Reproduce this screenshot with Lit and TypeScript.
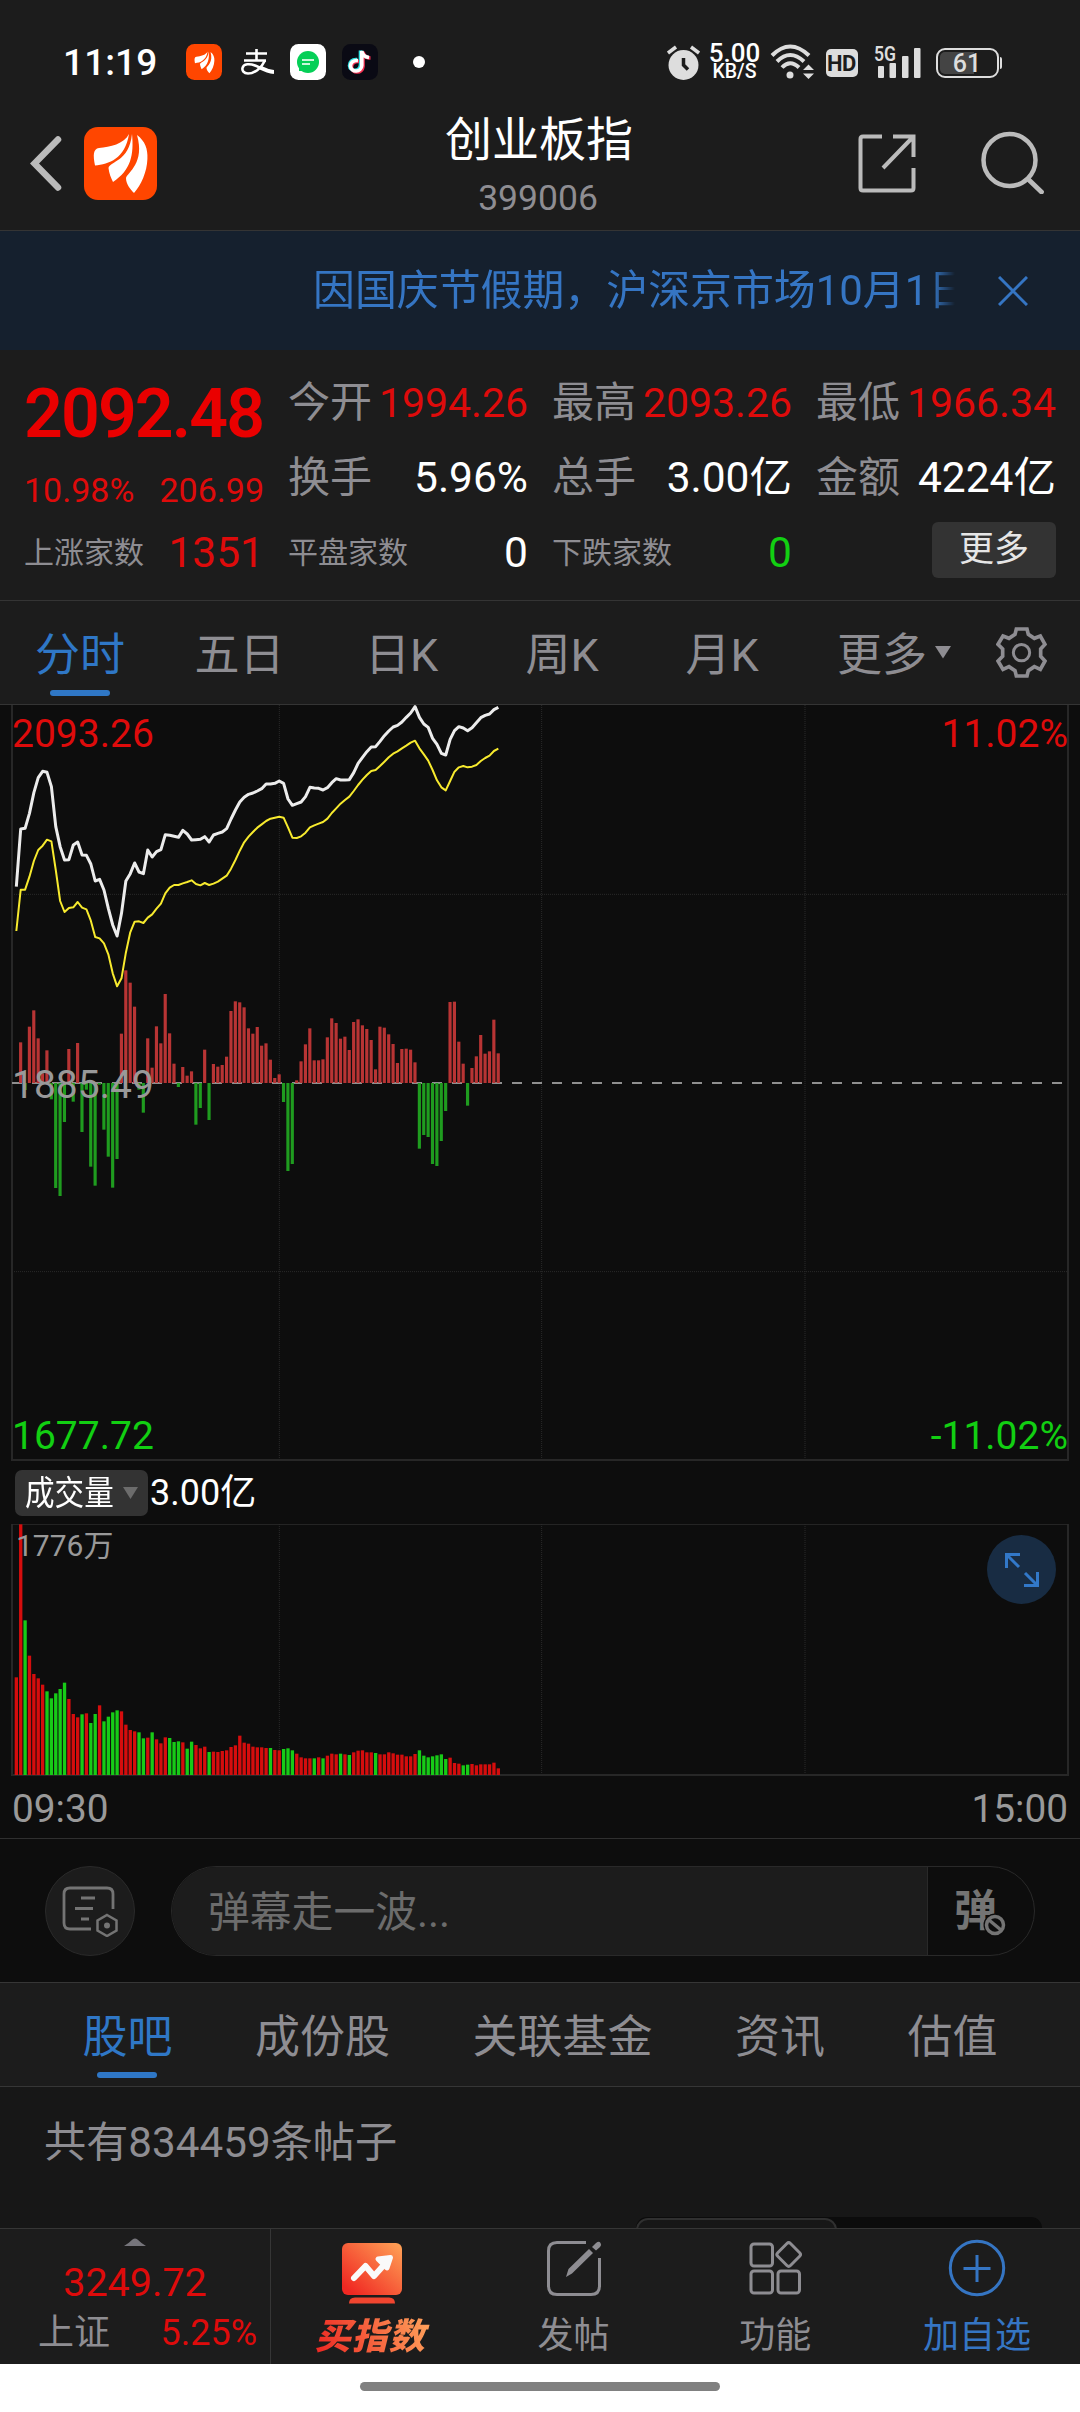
import { LitElement, html, svg, css } from "lit";
import { customElement, property } from "lit/decorators.js";
import { classMap } from "lit/directives/class-map.js";

/* ---------- chart data: drawn in thirds of a pixel, one sample per minute ---------- */
const X0 = 49;
const STEP = 13.145;
const at = (i: number) => X0 + STEP * i;

const PRICE = [
  560, 387, 385, 340, 278, 233, 214, 217, 260, 380, 440, 480, 479, 435, 426, 465, 466, 492, 543, 538, 570, 625,
  675, 708, 640, 543, 521, 489, 516, 521, 450, 471, 455, 449, 404, 406, 409, 412, 391, 402, 420, 419, 418, 410,
  426, 405, 400, 396, 386, 357, 330, 306, 292, 283, 279, 273, 266, 252, 252, 250, 243, 250, 297, 316, 311, 306,
  290, 262, 264, 265, 270, 263, 248, 236, 240, 240, 239, 218, 190, 172, 155, 141, 140, 124, 107, 93, 81, 76, 66,
  52, 39, 20, 52, 72, 82, 115, 133, 160, 165, 118, 92, 80, 84, 92, 83, 68, 53, 46, 42, 29, 22,
];
const AVERAGE = [
  693, 569, 569, 530, 483, 450, 437, 419, 424, 510, 603, 636, 624, 622, 606, 623, 628, 662, 711, 715, 730, 763,
  820, 859, 835, 758, 697, 665, 664, 669, 653, 643, 626, 611, 580, 563, 555, 555, 550, 546, 541, 552, 556, 549,
  555, 551, 545, 536, 527, 506, 480, 452, 427, 410, 396, 383, 373, 363, 356, 353, 350, 353, 382, 413, 414, 409,
  398, 382, 376, 371, 366, 356, 339, 325, 311, 300, 290, 273, 255, 239, 225, 213, 210, 198, 185, 172, 161, 154,
  145, 137, 128, 122, 145, 163, 182, 210, 241, 262, 271, 243, 215, 202, 198, 202, 200, 195, 183, 174, 167, 153,
  146,
];
const MOMENTUM = [
  0, 122, -21, 169, 218, 134, 29, 98, -49, -315, -339, -117, 102, -56, 120, -147, -20, -251, -308, -5, -140,
  -221, -314, -228, 148, 338, 301, 229, -20, -89, 134, 46, 170, 119, 267, 149, 58, -12, 48, 22, 35, -125, -75,
  100, -111, 57, 49, 54, 79, 216, 245, 242, 227, 164, 148, 168, 112, 119, 70, 15, 26, -57, -264, -243, 8, 65,
  116, 164, 68, 68, 71, 137, 194, 180, 133, 139, 99, 183, 191, 173, 162, 129, 41, 169, 166, 146, 117, 60, 102,
  103, 100, 62, -197, -156, -162, -243, -249, -174, -84, 243, 244, 124, 58, -68, 45, 80, 144, 88, 95, 190, 89,
];
/* positive: up minute, negative: down minute */
const VOLUME = [
  293, 752, -464, 358, 303, 290, 271, -251, -230, -245, -258, -277, 228, 183, 173, -182, 185, -156, -183, 209,
  -161, -175, -188, -194, 191, 151, 135, 131, -128, -110, 112, -128, 107, 95, 113, -111, -99, -101, 98, -79,
  -100, 90, 80, 85, -69, 70, 69, 72, 74, 84, 89, 118, 97, 94, 85, 83, 83, 81, -81, 75, 74, -78, -80, -74, 64,
  53, 50, 50, -50, 53, -50, 58, 64, 62, -64, 62, -60, 68, 73, 74, 68, 68, -66, 62, 62, 68, 65, 61, 61, 56, 56,
  63, -74, -58, -53, -56, -59, -62, -48, 52, 36, 34, -29, -31, 33, 29, 32, 32, 32, 37, 20,
];

const points = (values: number[]) => values.map((v, i) => `${at(i).toFixed(1)},${v - 15}`).join(" ");

const feathers = svg`
  <path d="M45 7C40 17 26 20 15 21C9 22 9 28 11 38.500C25 37 41 32 45 7Z"/>
  <path d="M48 7C50 28 47 43 29 55C27 51 25 46 24.500 41C26 34 45 35 48 7Z"/>
  <path d="M53 8C61 14 64 22 63.400 32C63 45 57 58 50 66C46 62 42 57 42 51C44 45 61 36 53 8Z"/>`;

@customElement("status-bar")
export class StatusBar extends LitElement {
  static styles = css`
    :host { display: flex; height: 96px; padding: 27px 78px 0 63px; box-sizing: border-box; color: #fff; font-family: Roboto, sans-serif; }
    .left, .right { display: flex; align-items: center; height: 70px; }
    .left { flex: 1; }
    .time { font-size: 37px; font-weight: 500; width: 123px; letter-spacing: 0.1px; }
    .app { margin-right: 16px; flex: none; }
    .pay { margin: 0 16px 0 3px; }
    .dot { width: 12px; height: 12px; border-radius: 50%; background: #fff; margin-left: 19px; }
    .rate { width: 54px; margin: 0 8px; text-align: center; font-weight: 500; }
    .num { font-size: 26px; line-height: 20px; }
    .unit { font-size: 19.500px; line-height: 18px; }
    .hd { margin: 2px 16px 0 12px; width: 32px; height: 28px; border-radius: 5px; background: #ddd; color: #1c1c1c; font-size: 22px; line-height: 29px; font-weight: 700; text-align: center; letter-spacing: -0.500px; }
    .signal { overflow: visible; }
    .cell { font-size: 20px; font-weight: 600; font-family: Roboto, sans-serif; }
    .battery { display: flex; align-items: center; margin-left: 15px; margin-top: 1px; }
    .shell { box-sizing: border-box; width: 63px; height: 30px; border: 2px solid #ddd; border-radius: 9px; padding: 2px; display: flex; }
    .level { width: 55px; border-radius: 5px; background: linear-gradient(90deg, #444 61%, transparent 61%); color: #ddd; font-size: 25px; line-height: 23px; text-align: center; font-weight: 500; }
    .nub { width: 2.500px; height: 12px; margin-left: 1px; background: #ddd; border-radius: 0 2px 2px 0; }
  `;
  render() {
    return html`
      <div class="left">
        <span class="time">11:19</span>
        <svg class="app" width="36" height="36" viewBox="0 0 73 73"><rect width="73" height="73" rx="17" fill="#ff4600"/><g fill="#fff" transform="translate(10 10) scale(.75)">${feathers}</g></svg>
        <svg class="pay" width="33" height="27" viewBox="0 0 33 27" fill="none" stroke="#fff">
          <path d="M5 4.500H26M3 11.500H25M15.500 0V11.500" stroke-width="2.600"/>
          <path d="M24 11.500C20 20 13 24.500 7 24.500C2.500 24.500 1 21.500 1.500 19C2.500 14.500 9 14.500 14 16.500C20 19 27 22.500 33 23" stroke-width="2.600"/>
          <path d="M19 18.500C24 21 28 22.500 33 23" stroke-width="4"/>
        </svg>
        <svg class="app" width="36" height="36" viewBox="0 0 36 36">
          <rect width="36" height="36" rx="8.500" fill="#fff"/><circle cx="18" cy="18" r="11" fill="#05cf57"/><path d="M9 18V27H18Z" fill="#05cf57"/>
          <path d="M12 16H24M12 20H20" stroke="#c8f7da" stroke-width="2"/>
        </svg>
        <svg class="app" width="36" height="36" viewBox="0 0 36 36" fill="none" stroke-width="3.600">
          <rect width="36" height="36" rx="8.500" fill="#0a0a14"/>
          <path d="M15 15.500C10 15 7.500 18 7.500 21.500C8 28 18 28 18.500 21V6.500C19 10.500 22 12.500 26 13" stroke="#33e4e6"/>
          <path d="M17 17.500C12 17 9.500 20 9.500 23C10 30 20.500 29.500 21 22.500V8C22 12 24 14 28.500 14" stroke="#f43052"/>
          <path d="M16 16.500C11 16 8.500 19 8.500 22C9 29 19.500 28.500 19.800 21.500V7C20.500 11 23 13 27 13.500" stroke="#fff"/>
        </svg>
        <span class="dot"></span>
      </div>
      <div class="right">
        <svg width="33" height="35" viewBox="0 0 33 35"><circle cx="16.500" cy="20" r="15" fill="#ddd"/><path d="M1 8L9 2M32 8L24 2" stroke="#ddd" stroke-width="3.500"/><path d="M16.500 13V20L21 24.500" fill="none" stroke="#1c1c1c" stroke-width="3.500"/></svg>
        <div class="rate"><div class="num">5.00</div><div class="unit">KB/S</div></div>
        <svg width="44" height="36" viewBox="0 0 44 36">
          <g fill="none" stroke="#ddd" stroke-width="4"><path d="M2 11.500Q20 -6.500 39 11.500"/><path d="M7 17.500Q20 4.500 34 17.500"/><path d="M12 23.500Q20 15 29 23.500"/></g>
          <circle cx="20" cy="31" r="3.500" fill="#ddd"/>
          <path d="M33 26L38.500 20.500L44 26ZM33 29.500L38.500 35L44 29.500Z" fill="#ddd"/>
        </svg>
        <div class="hd">HD</div>
        <svg class="signal" width="47" height="36" viewBox="0 0 47 36" fill="#ddd">
          <text class="cell" x="0" y="17" textLength="22" lengthAdjust="spacingAndGlyphs">5G</text>
          <rect x="4" y="22" width="6" height="12" rx="1"/><rect x="15.500" y="19" width="6.500" height="15" rx="1"/><rect x="28" y="12" width="6.500" height="22" rx="1"/><rect x="40" y="4" width="6.500" height="30" rx="1"/>
        </svg>
        <div class="battery"><div class="shell"><div class="level">61</div></div><div class="nub"></div></div>
      </div>`;
  }
}

@customElement("title-bar")
export class TitleBar extends LitElement {
  static styles = css`
    :host { display: grid; grid-template-columns: 360px 1fr 360px; height: 135px; box-sizing: border-box; border-bottom: 1px solid #343434; }
    .side { display: flex; align-items: flex-start; }
    .side.start { padding-left: 30px; padding-top: 31px; gap: 22px; }
    .side.end { justify-content: flex-end; padding: 35px 35px 0 0; gap: 65px; }
    .back { margin-top: 9px; }
    .title { text-align: center; }
    .name { font: 400 47px/64px "Noto Sans CJK SC", sans-serif; color: #fff; padding: 8px 2px 0 0; }
    .code { font: 400 35.500px/42px Roboto, sans-serif; color: #8e8d92; padding: 9px 4px 0 0; }
  `;
  render() {
    return html`
      <div class="side start">
        <svg class="back" width="32" height="55" viewBox="0 0 32 55"><path d="M28 3.500L4.500 27.500L28 51.500" fill="none" stroke="#bbb" stroke-width="6.500" stroke-linecap="round"/></svg>
        <svg width="73" height="73" viewBox="0 0 73 73"><rect width="73" height="73" rx="14" fill="#ff4600"/><g fill="#fff">${feathers}</g></svg>
      </div>
      <div class="title"><div class="name">创业板指</div><div class="code">399006</div></div>
      <div class="side end">
        <svg width="58" height="63" viewBox="0 0 58 63" fill="none" stroke="#bbb" stroke-width="4"><path d="M24 5.500H5Q2.500 5.500 2.500 8V57Q2.500 59.500 5 59.500H53Q55.500 59.500 55.500 57V37M35 5.500H55.500V26M55 6L25 37"/></svg>
        <svg width="64" height="63" viewBox="0 0 64 63" fill="none" stroke="#bbb"><circle cx="28.500" cy="29" r="26" stroke-width="4.500"/><path d="M47.500 48.500L60.500 61" stroke-width="4.800" stroke-linecap="round"/></svg>
      </div>`;
  }
}

@customElement("notice-bar")
export class NoticeBar extends LitElement {
  static styles = css`
    :host { display: flex; align-items: center; height: 119px; background: #15202e; box-sizing: border-box; padding: 0 52px 0 313px; justify-content: space-between; }
    .text { width: 646px; overflow: hidden; white-space: nowrap; color: #3575c3; font: 400 41.900px/60px Roboto, "Noto Sans CJK SC", sans-serif; padding-top: 1px; mask-image: linear-gradient(90deg, #000 620px, transparent 642px); -webkit-mask-image: linear-gradient(90deg, #000 620px, transparent 642px); }
  `;
  render() {
    return html`<div class="text">因国庆节假期，沪深京市场10月1日</div>
      <svg width="30" height="30" viewBox="0 0 30 30"><path d="M1 1L29 29M29 1L1 29" stroke="#3575c3" stroke-width="3"/></svg>`;
  }
}

@customElement("quote-panel")
export class QuotePanel extends LitElement {
  static styles = css`
    :host { display: grid; grid-template-columns: repeat(4, 240px); grid-template-rows: repeat(3, 75px); column-gap: 24px; height: 251px; box-sizing: border-box; padding: 15px 24px 0; border-bottom: 1px solid #343434; font-family: Roboto, "Noto Sans CJK SC", sans-serif; color: #8e8d92; }
    .main { grid-row: span 2; display: flex; flex-direction: column; color: #ea0000; }
    .price { font-size: 68px; font-weight: 600; line-height: 92px; letter-spacing: -1.900px; padding-top: 3px; }
    .change { display: flex; justify-content: space-between; font-size: 34px; line-height: 60px; color: #de0b0b; }
    .item { display: flex; justify-content: space-between; align-items: center; white-space: nowrap; }
    .key { font-size: 42px; line-height: 60px; }
    .key.small { font-size: 30px; }
    .val { font-size: 42.500px; line-height: 60px; color: #fff; }
    .val.up { color: #de0b0b; }
    .val.fit { font-size: 41px; }
    .val.down { color: #12d012; }
    .more { margin-left: auto; width: 124px; height: 56px; border-radius: 6px; background: #333; color: #e6e6e6; font-size: 35px; line-height: 56px; text-align: center; margin-top: -5px; }
  `;
  private item(key: string, value: string, tone = "", small = false) {
    return html`<div class="item"><span class=${classMap({ key: true, small })}>${key}</span><span class="val ${tone}">${value}</span></div>`;
  }
  render() {
    return html`
      <div class="main"><div class="price">2092.48</div><div class="change"><span>10.98%</span><span>206.99</span></div></div>
      ${this.item("今开", "1994.26", "up fit")}${this.item("最高", "2093.26", "up fit")}${this.item("最低", "1966.34", "up fit")}
      ${this.item("换手", "5.96%")}${this.item("总手", "3.00亿")}${this.item("金额", "4224亿")}
      ${this.item("上涨家数", "1351", "up", true)}${this.item("平盘家数", "0", "", true)}${this.item("下跌家数", "0", "down", true)}
      <div class="item"><div class="more">更多</div></div>`;
  }
}

@customElement("period-tabs")
export class PeriodTabs extends LitElement {
  static styles = css`
    :host { display: grid; grid-template-columns: 160px 159px 165px 156px 164px 180px 1fr; height: 104px; box-sizing: border-box; border-bottom: 1px solid #343434; color: #8e8d92; font: 400 45px/70px Roboto, "Noto Sans CJK SC", sans-serif; }
    .tab { display: flex; flex-direction: column; align-items: center; padding-top: 20px; white-space: nowrap; }
    .tab.on { color: #2f77c6; }
    .bar { width: 60px; height: 6px; border-radius: 3px; background: #2f77c6; margin-top: -1px; }
    .more { display: flex; gap: 8px; padding: 20px 0 0 33px; }
    .caret { margin-top: 24px; }
    .gear { margin: 26px 0 0 12px; }
  `;
  render() {
    return html`
      <div class="tab on">分时<span class="bar"></span></div>
      ${["五日", "日K", "周K", "月K"].map((t) => html`<div class="tab">${t}</div>`)}
      <div class="more">更多<svg class="caret" width="16" height="14" viewBox="0 0 16 14"><path d="M0 1H16L8 13.500Z" fill="#8e8d92"/></svg></div>
      <svg class="gear" width="51" height="51" viewBox="0 0 153 153" fill="none" stroke="#8e8d92">
        <path stroke-width="11" d="M61 6H93L97 22L115 34L133 27L147 52L134 66V88L147 102L133 127L115 119L97 131L93 147H61L57 131L39 119L21 127L6 102L20 88V66L6 52L21 27L39 34L57 22Z"/>
        <circle cx="76.500" cy="77" r="24.500" stroke-width="9"/>
      </svg>`;
  }
}

@customElement("intraday-chart")
export class IntradayChart extends LitElement {
  static styles = css`
    :host { display: block; background: #0d0d0d; height: 1134px; box-sizing: border-box; border-bottom: 1px solid #2f2f2f; font-family: Roboto, "Noto Sans CJK SC", sans-serif; }
    .plot { display: block; }
    .stage { position: relative; }
    .label { position: absolute; font-size: 39px; line-height: 46px; white-space: nowrap; }
    .l { left: 12px; }
    .r { right: 12px; }
    .top { top: 6px; }
    .mid { top: 357px; color: #999; }
    .low { top: 708px; }
    .up { color: #de0b0b; }
    .down { color: #12cf12; }
    .head { display: flex; align-items: center; height: 61px; padding: 0 15px; gap: 2px; margin-bottom: 1px; }
    .chip { display: flex; align-items: center; width: 133px; height: 46px; border-radius: 7px; background: #333; color: #fff; }
    .chip-text { flex: none; width: 98px; margin-left: 10px; font-size: 34px; line-height: 46px; transform: scaleX(0.87); transform-origin: left; white-space: nowrap; }
    .total { color: #fff; font-size: 36px; line-height: 46px; }
    .peak { left: 16px; top: -1px; font-size: 30px; color: #999; }
    .expand { position: absolute; left: 987px; top: 11px; width: 69px; height: 69px; border-radius: 50%; background: #182c43; display: flex; align-items: center; justify-content: center; }
    .times { display: flex; justify-content: space-between; padding: 10px 12px 0 12px; font-size: 38.800px; line-height: 46px; color: #999; }
  `;
  render() {
    const zero = 1134;
    const bottom = 753;
    return html`
      <div class="stage">
        <svg class="plot" width="1080" height="757" viewBox="0 0 3240 2271" fill="none">
          <g stroke="#2a2a2a" stroke-width="3" stroke-dasharray="3 3"><path d="M36 568H3204M36 1700H3204M838 0V2265M1625 0V2265M2415 0V2265"/></g>
          <path d="M36 0V2265H3204V0" stroke="#272727" stroke-width="6"/>
          <path d="M36 ${zero}H3204" stroke="#8f8f8f" stroke-width="6" stroke-dasharray="30 30"/>
          ${MOMENTUM.map((v, i) => v === 0 ? null : svg`<rect x=${at(i) - 5} y=${v > 0 ? zero - v : zero} width="9.500" height=${Math.abs(v)} fill=${v > 0 ? "#b83434" : "#1f9c1f"}/>`)}
          <polyline points=${points(PRICE)} stroke="#ececec" stroke-width="9" stroke-linejoin="round"/>
          <polyline points=${points(AVERAGE)} stroke="#f7ea2e" stroke-width="6" stroke-linejoin="round"/>
        </svg>
        <span class="label l top up">2093.26</span><span class="label r top up">11.02%</span>
        <span class="label l mid">1885.49</span>
        <span class="label l low down">1677.72</span><span class="label r low down">-11.02%</span>
      </div>
      <div class="head">
        <div class="chip"><span class="chip-text">成交量</span><svg width="15" height="12" viewBox="0 0 15 12"><path d="M0 0H15L7.500 12Z" fill="#6c6c6c"/></svg></div>
        <div class="total">3.00亿</div>
      </div>
      <div class="stage">
        <svg class="plot" width="1080" height="252" viewBox="0 0 3240 756" fill="none">
          <g stroke="#2a2a2a" stroke-width="3" stroke-dasharray="3 3"><path d="M838 0V753M1625 0V753M2415 0V753"/></g>
          <path d="M36 ${bottom}H3204M36 0V756M3204 0V756" stroke="#272727" stroke-width="6"/><path d="M36 -1H3204" stroke="#2c2c2c" stroke-width="6"/>
          ${VOLUME.map((v, i) => svg`<rect x=${at(i) - 5} y=${bottom - Math.abs(v)} width="10" height=${Math.abs(v)} fill=${v > 0 ? "#d50d0d" : "#17cb17"}/>`)}
        </svg>
        <span class="label peak">1776万</span>
        <div class="expand"><svg width="34" height="34" viewBox="0 0 34 34" fill="none" stroke="#3278c8" stroke-width="3"><path d="M1.500 15V1.500H15M2 2L14 14M32.500 19V32.500H19M32 32L20 20"/></svg></div>
      </div>
      <div class="times"><span>09:30</span><span>15:00</span></div>`;
  }
}

@customElement("barrage-bar")
export class BarrageBar extends LitElement {
  static styles = css`
    :host { display: flex; align-items: center; gap: 36px; height: 144px; box-sizing: border-box; padding: 0 45px; background: #0d0d0d; border-bottom: 1px solid #363636; font-family: "Noto Sans CJK SC", sans-serif; color: #6c6c6c; }
    .round { display: flex; align-items: center; justify-content: center; box-sizing: border-box; width: 90px; height: 90px; border-radius: 50%; background: #1c1c1c; border: 1px solid #2a2a2a; }
    .field { flex: 1; display: flex; box-sizing: border-box; height: 90px; border-radius: 45px; border: 1.500px solid #292929; overflow: hidden; }
    .input { flex: 1; background: #1c1c1c; padding-left: 36px; font-size: 41.800px; line-height: 91px; font-family: Roboto, "Noto Sans CJK SC", sans-serif; }
    .toggle { width: 107px; box-sizing: border-box; border-left: 1px solid #292929; display: flex; align-items: center; padding-left: 26px; }
    .mute { font-size: 43px; font-weight: 700; line-height: 80px; margin-top: -7px; color: #747474; }
    .ban { margin: 29px 0 0 -14px; }
  `;
  render() {
    return html`
      <div class="round">
        <svg width="56" height="52" viewBox="0 0 56 52" fill="none" stroke="#747474" stroke-width="2.800">
          <path d="M51 24V9Q51 3 45 3H8Q2 3 2 9V38Q2 44 8 44H29M19 13H33M13 23.500H31M19 34H27"/>
          <path d="M45 30L54.500 35.500V45.500L45 51L35.500 45.500V35.500Z" stroke-width="2.500"/><circle cx="45" cy="40.500" r="3" fill="#747474" stroke="none"/>
        </svg>
      </div>
      <div class="field">
        <div class="input">弹幕走一波...</div>
        <div class="toggle"><span class="mute">弹</span><svg class="ban" width="24" height="24" viewBox="0 0 24 24" fill="none"><circle cx="12" cy="12" r="11.500" fill="#0d0d0d"/><g stroke="#747474" stroke-width="3.500"><circle cx="12" cy="12" r="8.500"/><path d="M6 7L18 17"/></g></svg></div>
      </div>`;
  }
}

@customElement("section-tabs")
export class SectionTabs extends LitElement {
  static styles = css`
    :host { display: flex; justify-content: space-evenly; height: 104px; box-sizing: border-box; border-bottom: 1px solid #363636; color: #8e8d92; font: 400 45px/70px Roboto, "Noto Sans CJK SC", sans-serif; }
    .tab { display: flex; flex-direction: column; align-items: center; padding-top: 20px; }
    .tab.on { color: #2f77c6; }
    .bar { width: 60px; height: 6px; border-radius: 3px; background: #2f77c6; margin-top: -1px; }
  `;
  @property({ type: Number }) active = 0;
  render() {
    return ["股吧", "成份股", "关联基金", "资讯", "估值"].map(
      (t, i) => html`<div class=${classMap({ tab: true, on: i === this.active })}>${t}${i === this.active ? html`<span class="bar"></span>` : null}</div>`,
    );
  }
}

@customElement("post-list")
export class PostList extends LitElement {
  static styles = css`
    :host { display: flex; flex-direction: column; justify-content: space-between; height: 141px; background: #171717; overflow: hidden; }
    .count { padding: 26px 44px 0; color: #8e8d92; font: 400 42.200px/60px Roboto, "Noto Sans CJK SC", sans-serif; }
    .switch { display: flex; flex: none; width: 406px; height: 11px; margin-left: 636px; border-radius: 12px 12px 0 0; background: #0c0c0c; overflow: hidden; }
    .knob { box-sizing: border-box; width: 201px; height: 30px; border: 2px solid #303030; border-radius: 12px; background: #171717; margin-top: 1px; }
  `;
  render() {
    return html`<div class="count">共有834459条帖子</div><div class="switch"><div class="knob"></div></div>`;
  }
}

@customElement("bottom-bar")
export class BottomBar extends LitElement {
  static styles = css`
    :host { display: grid; grid-template-columns: 271px repeat(4, 1fr); height: 136px; box-sizing: border-box; padding-right: 2px; border-top: 1px solid #363636; font-family: Roboto, "Noto Sans CJK SC", sans-serif; color: #8e8d92; }
    .index { box-sizing: border-box; border-right: 1px solid #363636; display: flex; flex-direction: column; align-items: center; padding-top: 9px; color: #de0b0b; }
    .value { font-size: 39.500px; line-height: 48px; padding-top: 13px; }
    .row { display: flex; justify-content: space-between; align-self: stretch; padding: 0 13px 0 38px; font-size: 36px; line-height: 53px; }
    .name { color: #8e8d92; }
    .act { display: flex; flex-direction: column; align-items: center; padding-top: 9px; font-size: 36px; line-height: 50px; }
    .icon { display: block; height: 60px; margin-bottom: 13px; flex: none; }
    .act.blue { color: #3575c3; }
    .act.hot { font-family: "Noto Sans CJK SC", sans-serif; font-weight: 900; font-style: italic; }
    .hot .icon { height: 68px; margin-bottom: 2px; }
    .hot-text { background: linear-gradient(70deg, #ee2a24 10%, #ffa45c 95%); -webkit-background-clip: text; background-clip: text; color: transparent; padding: 0 8px; margin-left: -3px; font-size: 36px; letter-spacing: 1px; }
  `;
  render() {
    return html`
      <div class="index">
        <svg width="22" height="8" viewBox="0 0 22 8"><path d="M0 8Q5 5 8.500 1.500Q11 -0.500 13.500 1.500Q17 5 22 8Z" fill="#76757b"/></svg>
        <div class="value">3249.72</div>
        <div class="row"><span class="name">上证</span><span>5.25%</span></div>
      </div>
      <div class="act hot">
        <svg class="icon" width="62" height="68" viewBox="0 0 62 68">
          <defs><linearGradient id="g" x1="0" y1="1" x2="1" y2="0"><stop offset="0.100" stop-color="#f02822"/><stop offset="1" stop-color="#ffa457"/></linearGradient></defs>
          <g transform="translate(0 3)"><rect x="1" y="2" width="60" height="52" rx="6" fill="url(#g)"/><path d="M8 62.500Q8 56.500 14 56.500H48Q54 56.500 54 62.500Z" fill="#f0452f"/>
          <path d="M13 37L24.500 25L33 35L47 19.500" fill="none" stroke="#fafafa" stroke-width="6" stroke-linecap="round" stroke-linejoin="round"/><path d="M37 18L49.500 16.500L46 27Z" fill="#fafafa" stroke="#fafafa" stroke-width="5" stroke-linejoin="round"/></g>
        </svg>
        <span class="hot-text">买指数</span>
      </div>
      <div class="act">
        <svg class="icon" width="56" height="60" viewBox="0 0 56 60" fill="none" stroke="#8e8d92" stroke-width="3"><path d="M40 4.500H11Q2.500 4.500 2.500 13V48Q2.500 56.500 11 56.500H45Q53.500 56.500 53.500 48V20"/><path d="M20 39L22.500 31L43 11L47 15L26 35.500ZM46 9L50 5Q53 2.500 54.500 5Q56 7 54 9L50 12.500Z" fill="#8e8d92" stroke="none"/></svg>
        <span>发帖</span>
      </div>
      <div class="act">
        <svg class="icon" width="54" height="60" viewBox="0 0 54 60" fill="none" stroke="#8e8d92" stroke-width="3"><rect x="3" y="6" width="21.500" height="22" rx="3"/><rect x="3" y="33" width="21.500" height="22" rx="3"/><rect x="30" y="33" width="21.500" height="22" rx="3"/><rect x="31.700" y="7.500" width="18" height="18" rx="2.500" transform="rotate(45 40.700 16.500)"/></svg>
        <span>功能</span>
      </div>
      <div class="act blue">
        <svg class="icon" width="58" height="60" viewBox="0 0 58 60" fill="none" stroke="#3575c3" stroke-width="3"><circle cx="29" cy="30" r="26.700"/><path d="M15.500 30.500H42.500M29 17V44"/></svg>
        <span>加自选</span>
      </div>`;
  }
}

@customElement("app-root")
export class AppRoot extends LitElement {
  static styles = css`
    :host { display: flex; flex-direction: column; width: 1080px; height: 2412px; background: #1c1c1c; overflow: hidden; }
    .home { display: flex; justify-content: center; height: 48px; background: #fff; padding-top: 18px; box-sizing: border-box; }
    .pill { width: 360px; height: 9px; border-radius: 5px; background: #808080; }
  `;
  render() {
    return html`
      <status-bar></status-bar>
      <title-bar></title-bar>
      <notice-bar></notice-bar>
      <quote-panel></quote-panel>
      <period-tabs></period-tabs>
      <intraday-chart></intraday-chart>
      <barrage-bar></barrage-bar>
      <section-tabs></section-tabs>
      <post-list></post-list>
      <bottom-bar></bottom-bar>
      <div class="home"><div class="pill"></div></div>`;
  }
}
